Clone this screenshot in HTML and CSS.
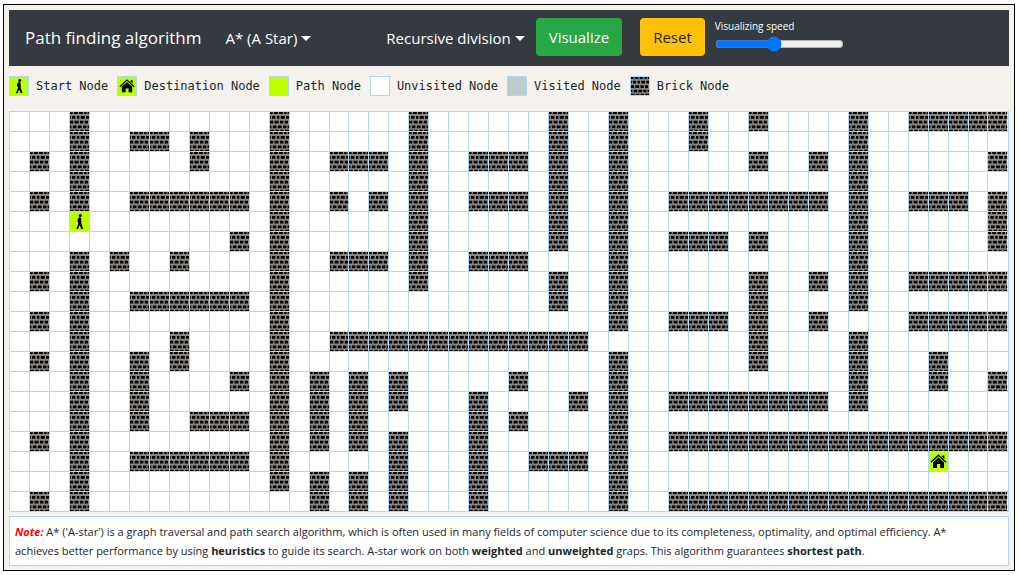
FILE: index.html
```html
<!DOCTYPE html>
<html lang="en">
<head>
<meta charset="utf-8">
<title>Path finding algorithm</title>
<link rel="stylesheet" href="styles.css">
</head>
<body>
<svg class="sprite" aria-hidden="true">
  <symbol id="walker" viewBox="0 0 18 18">
    <circle cx="9.8" cy="3.4" r="1.5"/>
    <path d="M8.8 5 10.4 5.4 10.8 9.6 10.6 10.8 12.4 15.2 12.2 16.2 10.6 16 9.2 12.4 8.2 14.6 7.8 16.2 6 16.2 6.2 15.4 7.8 11.4 7.8 9.4 7 9 7.2 6.8Z"/>
  </symbol>
  <symbol id="house" viewBox="0 0 18 18">
    <path d="M9 2.2 16.6 9.2 15.8 10.2 9 4.1 2.2 10.2 1.4 9.2ZM12.6 3.2H14.6V6.6L12.6 4.8ZM9 5.2 14.2 9.8V15.2H10.6V11.4H7.6V15.2H3.8V9.8Z"/>
  </symbol>
  <symbol id="brick" viewBox="0 0 19 19">
    <rect width="19" height="19" fill="#8a8683"/>
    <path d="M0 0h2.6v2h-2.6zM4 0h3.8v2h-3.8zM9.2 0h3.6v2h-3.6zM14.2 0h2.4v2h-2.4zM17.8 0h1.2v2h-1.2zM0 4h.8v2.8h-.8zM2 4h3.4v2.8h-3.4zM7 4h2.4v2.8h-2.4zM10.8 4h4v2.8h-4zM16.2 4h2.8v2.8h-2.8zM0 8.8h3.2v2.8h-3.2zM4.6 8.8h4v2.8h-4zM10 8.8h3.4v2.8h-3.4zM14.8 8.8h3.2v2.8h-3.2zM0 13.4h1.4v2.8h-1.4zM2.8 13.4h3.6v2.8h-3.6zM7.8 13.4h3.8v2.8h-3.8zM13 13.4h3.4v2.8h-3.4zM17.6 13.4h1.4v2.8h-1.4zM0 17.8h3.8v1.2h-3.8zM5.2 17.8h3.6v1.2h-3.6zM10.2 17.8h3.4v1.2h-3.4zM15 17.8h4v1.2h-4z"/>
  </symbol>
</svg>
<div class="frame">
  <header class="navbar">
    <h1 class="brand">Path finding algorithm</h1>
    <button class="menu menu-algorithm" type="button" aria-haspopup="true">A* (A Star)</button>
    <button class="menu menu-maze" type="button" aria-haspopup="true">Recursive division</button>
    <button class="btn btn-visualize" type="button">Visualize</button>
    <button class="btn btn-reset" type="button">Reset</button>
    <div class="speed">
      <label for="speed">Visualizing speed</label>
      <input id="speed" type="range" min="0" max="100" value="45">
    </div>
  </header>
  <ul class="legend">
    <li><span class="swatch lime"><svg><use href="#walker"/></svg></span>Start Node</li>
    <li><span class="swatch lime"><svg><use href="#house"/></svg></span>Destination Node</li>
    <li><span class="swatch lime"></span>Path Node</li>
    <li><span class="swatch unvisited"></span>Unvisited Node</li>
    <li><span class="swatch visited"></span>Visited Node</li>
    <li><span class="swatch"><svg><use href="#brick"/></svg></span>Brick Node</li>
  </ul>
  <table class="grid" aria-label="Maze"><tbody id="maze"></tbody></table>
  <p class="note"><em>Note:</em> A* ('A-star') is a graph traversal and path search algorithm, which is often used in many fields of computer science due to its completeness, optimality, and optimal efficiency. A* achieves better performance by using <b>heuristics</b> to guide its search. A-star work on both <b>weighted</b> and <b>unweighted</b> graps. This algorithm guarantees <b>shortest path</b>.</p>
</div>
<script src="maze.js"></script>
</body>
</html>
```
FILE: styles.css
```css
* { box-sizing: border-box; }
body {
  margin: 4px 4px 4px 3px;
  background: #fff;
  color: #212529;
  font-family: "Open Sans", "Noto Sans", sans-serif;
}
.sprite { display: none; }
.frame {
  padding: 5px 5px 4px;
  border: 1px solid #000;
  background: #f5f1ec;
}
.navbar {
  display: flex;
  align-items: center;
  height: 56px;
  padding: 0 16px;
  background: #343a40;
  color: #fff;
}
.brand { margin: 0; font-size: 17px; font-weight: 400; line-height: 30px; }
button { font-family: inherit; cursor: pointer; }
.menu {
  display: flex;
  align-items: center;
  gap: 4px;
  padding: 0;
  border: 0;
  background: none;
  color: #fff;
  font-size: 15px;
  line-height: 24px;
}
.menu::after {
  content: "";
  border: 5px solid transparent;
  border-top-color: #fff;
  border-bottom: 0;
}
.menu-algorithm { margin-left: 24px; }
.menu-maze { margin-left: 75px; }
.btn {
  height: 38px;
  margin-bottom: 2px;
  padding: 0 13px;
  border: 0;
  border-radius: 4px;
  font-size: 15px;
  line-height: 24px;
}
.btn-visualize { margin-left: 11px; background: #28a745; color: #fff; }
.btn-reset { margin-left: 18px; background: #ffc107; color: #212529; }
.speed {
  display: flex;
  flex-direction: column;
  margin-left: 10px;
  padding-bottom: 6px;
  font-size: 10px;
  line-height: 16px;
}
.speed input { width: 129px; height: 16px; margin: 2px 0 0; }
.legend {
  display: flex;
  gap: 9px;
  margin: 10px 0 15px;
  padding: 0;
  list-style: none;
  font: 12px/20px "DejaVu Sans Mono", monospace;
}
.legend li { display: flex; align-items: center; gap: 7px; }
.swatch { width: 20px; height: 20px; border: 1px solid #afd8f8; }
svg { display: block; width: 100%; height: 100%; }
.lime { background: #bbff00; }
.unvisited { background: #fff; }
.visited { background: #bccccc; }
.grid { width: 100%; border-collapse: collapse; table-layout: fixed; background: #fff; }
.grid td { height: 20px; padding: 0; border: 1px solid #afd8f8; }
.grid svg { height: 19px; }
.note {
  margin: 4px 0 0;
  padding: 5px 24px 5px 5px;
  border: 1px solid #afd8f8;
  background: #fff;
  font-size: 11px;
  line-height: 19px;
}
.note em { color: #f00; font-weight: 700; }
```
FILE: maze.js
```js
// Each row lists its brick columns, as single numbers or inclusive ranges.
const rows = [
  "3 13 20 27 30 34 37 42 45-49",
  "3 6 7 9 13 20 27 30 34 42",
  "1 3 9 13 16-18 20 23-25 27 30 37 40 42 49",
  "3 13 20 27 30 42",
  "1 3 6-11 13 16 18 20 23-25 27 30 33-40 42 45-47 49",
  "13 20 27 30 42 49",
  "11 13 20 27 30 33-35 37 42 49",
  "3 5 8 13 16-18 20 23-25 30 42",
  "1 3 13 20 27 30 37 40 42 45-49",
  "3 6-11 13 27 30 37 42",
  "1 3 13 30 33-35 37 40 45-49",
  "3 8 13 16-28 37 42",
  "1 3 6 8 13 30 37 42 46",
  "3 6 11 13 15 17 19 25 30 42 46 49",
  "3 6 13 15 17 19 23 28 30 33-40 42",
  "3 6 9-11 13 15 17 23 25 30",
  "1 3 13 15 17 19 23 30 33-49",
  "3 6-11 13 19 23 26-28 30",
  "3 13 15 17 19 23 30",
  "1 3 15 17 19 23 30 33-49"
];
const columns = 50;
const start = [5, 3];
const destination = [17, 46];
const icon = name => `<svg preserveAspectRatio="none"><use href="#${name}"/></svg>`;

document.getElementById("maze").innerHTML = rows.map((row, r) => {
  const bricks = new Set();
  row.split(" ").forEach(part => {
    const [from, to = from] = part.split("-").map(Number);
    for (let c = from; c <= to; c++) bricks.add(c);
  });
  let cells = "";
  for (let c = 0; c < columns; c++) {
    if (r === start[0] && c === start[1]) cells += `<td class="lime">${icon("walker")}</td>`;
    else if (r === destination[0] && c === destination[1]) cells += `<td class="lime">${icon("house")}</td>`;
    else cells += bricks.has(c) ? `<td>${icon("brick")}</td>` : "<td></td>";
  }
  return `<tr>${cells}</tr>`;
}).join("");
```
